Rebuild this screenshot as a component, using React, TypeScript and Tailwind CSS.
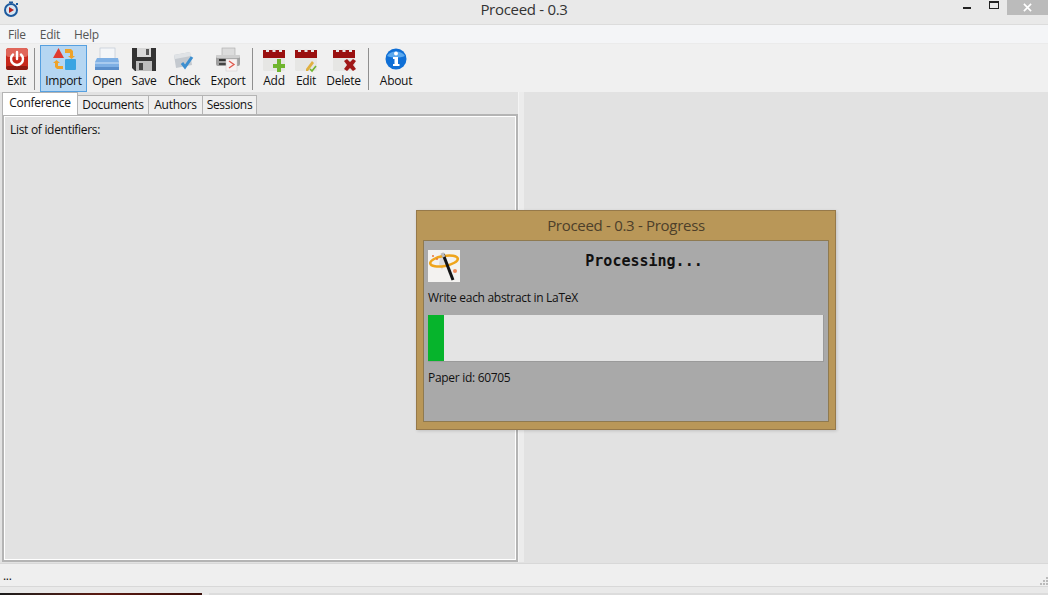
import type { ReactNode } from 'react';

const Separator = () => <div className="ml-[3px] mr-[5px] mt-[3px] h-[42px] w-px bg-[#8f8f8f]" />;

const ToolButton = (props: { label: string; icon: ReactNode; active?: boolean; width: number }) => {
  const { label, icon, active, width } = props;
  return (
    <div
      style={{ width }}
      className={`flex h-[47px] flex-col items-center border pt-[1px] ${
        active ? 'border-[#56a0e0] bg-[#b5d6f2]' : 'border-transparent'
      }`}
    >
      <div className="h-[26px] w-[26px]">{icon}</div>
      <span className="text-[12px] leading-[16px] text-[#111]">{label}</span>
    </div>
  );
};

const ExitIcon = () => (
  <svg viewBox="0 0 26 26" className="h-full w-full">
    <rect x="2" y="1" width="22" height="22" rx="3" fill="#c8281c" />
    <rect x="2" y="1" width="22" height="9" rx="3" fill="#e0665a" />
    <rect x="2" y="19" width="22" height="4" rx="2" fill="#8f1a12" />
    <path d="M9 7.5a6 6 0 1 0 8 0" fill="none" stroke="#fff" strokeWidth="2.4" strokeLinecap="round" />
    <path d="M13 5v7" stroke="#fff" strokeWidth="2.4" strokeLinecap="round" />
  </svg>
);

const ImportIcon = () => (
  <svg viewBox="0 0 26 26" className="h-full w-full">
    <path d="M7.5 1l5.5 10H2z" fill="#e03b30" />
    <rect x="14" y="12" width="11" height="11" rx="1" fill="#3aa4e2" />
    <path d="M14 2h6l2 2v5h2l-3.500 3-3.500-3h2V6h-5z" fill="#eea32a" />
    <path d="M12 22H6l-2-2v-4H2l3.500-3 3.500 3H7v3h5z" fill="#eea32a" />
  </svg>
);

const OpenIcon = () => (
  <svg viewBox="0 0 26 26" className="h-full w-full">
    <rect x="6" y="1" width="15" height="11" fill="#f4f6f8" stroke="#b8c4d0" strokeWidth="0.6" />
    <path d="M3 11h21l1 4v7a1 1 0 0 1-1 1H2a1 1 0 0 1-1-1v-7z" fill="#7fb0e4" />
    <rect x="1" y="15" width="24" height="2" fill="#a9cbef" />
    <rect x="1" y="20" width="24" height="3" fill="#5b8fcb" />
  </svg>
);

const SaveIcon = () => (
  <svg viewBox="0 0 26 26" className="h-full w-full">
    <path d="M1 1h24v23H4l-3-3z" fill="#333" />
    <rect x="6" y="1" width="14" height="9" fill="#d8d8d8" />
    <rect x="15" y="2" width="3" height="6" fill="#555" />
    <rect x="5" y="14" width="16" height="10" fill="#bdbdbd" />
    <rect x="8" y="16" width="4" height="7" fill="#444" />
  </svg>
);

const CheckIcon = () => (
  <svg viewBox="0 0 26 26" className="h-full w-full">
    <path d="M3 8l16-3 2 13-16 3z" fill="#c4c9cf" />
    <path d="M3 8l16-3 1 4-16 3z" fill="#e0e3e6" />
    <path d="M11 16l3 4 7-10" fill="none" stroke="#3c8fd0" strokeWidth="3" />
  </svg>
);

const ExportIcon = () => (
  <svg viewBox="0 0 26 26" className="h-full w-full">
    <rect x="7" y="1" width="13" height="8" fill="#dcdcdc" stroke="#a8a8a8" strokeWidth="0.6" />
    <rect x="1" y="8" width="24" height="11" rx="2" fill="#a0a0a0" />
    <rect x="1" y="8" width="24" height="3" rx="1.500" fill="#cfcfcf" />
    <rect x="4" y="12" width="7" height="2" fill="#333" />
    <rect x="4" y="16" width="7" height="2" fill="#444" />
    <rect x="11" y="12" width="11" height="12" fill="#f7f1f1" stroke="#ccc" strokeWidth="0.5" />
    <path d="M14 14l5 3.500-5 3.500" fill="none" stroke="#e0584c" strokeWidth="1.300" />
  </svg>
);

const CalendarBase = (props: { children: ReactNode }) => (
  <svg viewBox="0 0 26 26" className="h-full w-full">
    <rect x="2" y="3" width="22" height="21" rx="1.500" fill="#e6e6e4" />
    <rect x="2" y="3" width="22" height="8" fill="#9a1010" />
    <rect x="5" y="2" width="3" height="3" fill="#e8e8e8" />
    <rect x="11.500" y="2" width="3" height="3" fill="#e8e8e8" />
    <rect x="18" y="2" width="3" height="3" fill="#e8e8e8" />
    {props.children}
  </svg>
);

const AboutIcon = () => (
  <svg viewBox="0 0 26 26" className="h-full w-full">
    <circle cx="13" cy="12" r="10.500" fill="#0f6fd6" />
    <path d="M4 9a10 8 0 0 1 18 0c-5 2-13 2-18 0z" fill="#5aa8ee" />
    <circle cx="13" cy="6.500" r="2" fill="#fff" />
    <path d="M10 10h5v7h1.500v2h-6.500v-2h1.500v-5H10z" fill="#fff" />
  </svg>
);

const AppIcon = () => (
  <svg viewBox="0 0 16 16" className="h-[16px] w-[16px]">
    <circle cx="8" cy="9" r="6" fill="#d8e6f2" stroke="#1d5a9e" strokeWidth="2" />
    <path d="M6 6l5 3-5 3z" fill="#b32020" />
    <rect x="6" y="0.500" width="4" height="1.500" fill="#1d5a9e" />
    <rect x="13" y="2" width="2" height="2" fill="#1d5a9e" />
  </svg>
);

const WandIcon = () => (
  <svg viewBox="0 0 32 32" className="h-[32px] w-[32px]">
    <rect width="32" height="32" fill="#f3f2f0" />
    <path d="M13 3l6 5-5 12-3-6z" fill="#d2d2d2" opacity="0.700" />
    <ellipse cx="16" cy="11" rx="14" ry="5" fill="none" stroke="#efa51c" strokeWidth="2.500" transform="rotate(-10 16 11)" />
    <path d="M15 4l10 26" stroke="#141414" strokeWidth="3" />
    <path d="M14 3l2 4" stroke="#bcbcbc" strokeWidth="3" />
    <circle cx="5" cy="6" r="1" fill="#e8743a" />
    <circle cx="9" cy="9" r="1" fill="#e8743a" />
    <circle cx="27" cy="21" r="2" fill="#ee8a5a" />
  </svg>
);

const Tab = (props: { label: string; active?: boolean; width: number }) => {
  const { label, active, width } = props;
  return active ? (
    <div
      style={{ width }}
      className="z-10 -mb-[1px] -mt-[3px] flex h-[23px] items-center justify-center border border-b-0 border-[#b4b4b4] bg-white pb-[2px] text-[12px] text-[#111]"
    >
      {label}
    </div>
  ) : (
    <div
      style={{ width }}
      className="-ml-px flex h-[20px] items-center justify-center border border-[#b4b4b4] bg-[#efefef] text-[12px] text-[#111]"
    >
      {label}
    </div>
  );
};

const App = () => {
  return (
    <div className="relative flex h-[595px] w-[1048px] flex-col overflow-hidden bg-[#e2e2e2] font-['Open_Sans','Liberation_Sans',sans-serif] tracking-[-0.3px]">
      {/* title bar */}
      <div className="relative h-[24px] bg-[#e9e9e9] pt-[1px] text-center text-[15px] leading-[17px] text-[#333]">
        <div className="absolute left-[3px] top-[1px]">
          <AppIcon />
        </div>
        Proceed - 0.3
        <div className="absolute right-[77px] top-[7px] h-[2px] w-[8px] bg-[#222]" />
        <div className="absolute right-[49px] top-[1px] h-[8px] w-[10px] border border-t-2 border-[#222]" />
        <div className="absolute right-0 top-0 flex h-[15px] w-[41px] items-center justify-center bg-[#bbb]">
          <svg viewBox="0 0 10 10" className="h-[9px] w-[9px]">
            <path d="M1 1l8 8M9 1l-8 8" stroke="#fff" strokeWidth="1.800" />
          </svg>
        </div>
      </div>

      {/* menu */}
      <div className="flex h-[19px] items-center gap-[14px] border-t border-[#dcdcdc] bg-[#f4f5f7] pl-[8px] pt-[1px] text-[12px] text-[#555]">
        <span>File</span>
        <span>Edit</span>
        <span>Help</span>
      </div>

      {/* toolbar */}
      <div className="flex h-[49px] items-start border-t border-[#ebebeb] bg-[#f0f0f0] pl-[2px] pt-[1px]">
        <ToolButton label="Exit" width={29} icon={<ExitIcon />} />
        <Separator />
        <ToolButton label="Import" width={47} active icon={<ImportIcon />} />
        <ToolButton label="Open" width={40} icon={<OpenIcon />} />
        <ToolButton label="Save" width={34} icon={<SaveIcon />} />
        <ToolButton label="Check" width={46} icon={<CheckIcon />} />
        <ToolButton label="Export" width={42} icon={<ExportIcon />} />
        <Separator />
        <ToolButton label="Add" width={32} icon={<CalendarBase><path d="M16 12h4v5h4v4h-4v4h-4v-4h-4v-4h4z" fill="#6fb52e" /></CalendarBase>} />
        <ToolButton label="Edit" width={32} icon={<CalendarBase><path d="M13 22l6-8 2 2-6 8h-2z" fill="#e0b040" /><path d="M17 22l2 2 4-5" fill="none" stroke="#6fb52e" strokeWidth="1.600" /></CalendarBase>} />
        <ToolButton label="Delete" width={43} icon={<CalendarBase><path d="M13 14l3-2 3 3 3-3 3 2-3 4 3 4-3 2-3-3-3 3-3-2 3-4z" fill="#a01818" /></CalendarBase>} />
        <Separator />
        <ToolButton label="About" width={44} icon={<AboutIcon />} />
      </div>

      {/* main area */}
      <div className="flex min-h-0 flex-1">
        <div className="flex w-[518px] flex-col pl-[2px] pt-[3px]">
          <div className="flex">
            <Tab label="Conference" active width={76} />
            <Tab label="Documents" width={72} />
            <Tab label="Authors" width={55} />
            <Tab label="Sessions" width={55} />
          </div>
          <div className="-mt-px flex-1 border-2 border-[#b4b4b4]">
            <div className="h-full border border-white px-[5px] pt-[5px] text-[12px] leading-[16px] text-[#111]">
              List of identifiers:
            </div>
          </div>
        </div>
        <div className="w-[6px] border-l border-[#f4f4f4] bg-[#ececec]" />
        <div className="flex-1" />
      </div>

      {/* status bar */}
      <div className="relative mt-[1px] h-[24px] border-y border-[#d8d8d8] bg-[#efefef] pl-[3px] pt-[4px] text-[12px] leading-[16px] text-[#111]">
        ...
        <div className="absolute bottom-[1px] right-0 grid grid-cols-3 gap-[1px]">
          <span />
          <span />
          <span className="h-[2px] w-[2px] bg-[#bbb]" />
          <span />
          <span className="h-[2px] w-[2px] bg-[#bbb]" />
          <span className="h-[2px] w-[2px] bg-[#bbb]" />
          <span className="h-[2px] w-[2px] bg-[#bbb]" />
          <span className="h-[2px] w-[2px] bg-[#bbb]" />
          <span className="h-[2px] w-[2px] bg-[#bbb]" />
        </div>
      </div>
      <div className="flex h-[8px] flex-col bg-[#e9e9e9]">
        <div className="mt-[6px] flex h-[2px]">
          <div className="w-[202px] bg-gradient-to-r from-[#1b1b1b] via-[#5c1a12] to-[#3a0f0a]" />
          <div className="ml-[7px] flex-1 bg-[#dcdcdc]" />
        </div>
      </div>

      {/* progress dialog */}
      <div className="absolute left-[416px] top-[210px] flex h-[220px] w-[420px] flex-col border border-[#96794a] bg-[#b99758] shadow-[1px_1px_3px_rgba(0,0,0,0.15)]">
        <div className="flex h-[29px] items-center justify-center text-[15px] text-[#4d3f2a]">Proceed - 0.3 - Progress</div>
        <div className="mx-[6px] flex h-[182px] flex-col border border-[#8f7a50] bg-[#a9a9a9] px-[4px] pt-[9px] text-[12px] leading-[16px] text-[#111]">
          <div className="flex h-[32px]">
            <WandIcon />
            <div className="flex-1 pl-[4px] pt-[3px] text-center font-['DejaVu_Sans_Mono',monospace] text-[15px] font-bold tracking-normal">Processing...</div>
          </div>
          <div className="mt-[8px]">Write each abstract in LaTeX</div>
          <div className="mt-[9px] flex h-[47px] border-b border-r border-[#9a9a9a] bg-[#e4e4e4]">
            <div className="w-[16px] bg-[#06b42c]" />
          </div>
          <div className="mt-[8px]">Paper id: 60705</div>
        </div>
      </div>
    </div>
  );
};

export default App;
